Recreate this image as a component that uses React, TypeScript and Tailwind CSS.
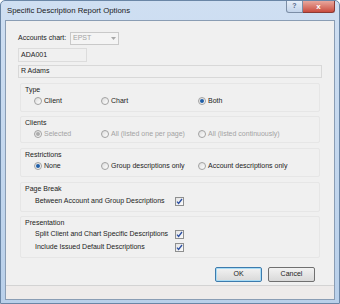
import React from "react";

const font = { fontFamily: '"Liberation Sans", Arial, sans-serif' };

const Radio = ({ checked, disabled }: { checked?: boolean; disabled?: boolean }) => (
  <span className="w-[8px] h-[8px] rounded-full border border-[#a2a2a2] bg-gradient-to-br from-[#dcdcdc] to-[#ffffff] flex items-center justify-center shrink-0">
    {checked && (
      <span
        className={
          "w-[4px] h-[4px] rounded-full " +
          (disabled ? "bg-[#acacac]" : "bg-[#1f5fa8]")
        }
      />
    )}
  </span>
);

const Check = () => (
  <span className="w-[9px] h-[9px] border border-[#8e8f8f] bg-gradient-to-br from-[#e4e4e4] to-[#fbfbfb] flex items-center justify-center shrink-0">
    <svg width="7" height="7" viewBox="0 0 7 7">
      <path d="M1 3.6 L2.6 5.4 L6 1" fill="none" stroke="#2b4fa2" strokeWidth="1.3" />
    </svg>
  </span>
);

const RadioItem = ({
  label,
  checked,
  disabled,
  width,
}: {
  label: string;
  checked?: boolean;
  disabled?: boolean;
  width: string;
}) => (
  <div className={"flex items-center gap-[2px] " + width}>
    <Radio checked={checked} disabled={disabled} />
    <span className={disabled ? "text-[#a3a3a3]" : "text-[#222]"}>{label}</span>
  </div>
);

const Group = ({
  title,
  className,
  children,
}: {
  title: string;
  className: string;
  children: React.ReactNode;
}) => (
  <div className={"mx-[14px] border border-[#e6e6e6] rounded-[2px] flex flex-col " + className}>
    <div className="pl-[4px] text-[#222] leading-none flex items-center h-[11px]">{title}</div>
    {children}
  </div>
);

export default function App() {
  return (
    <div
      className="w-[340px] h-[304px] border border-[#6a86a6] rounded-t-[5px] bg-gradient-to-b from-[#cfdff2] to-[#b9d0ea] flex flex-col text-[7px]"
      style={font}
    >
      {/* title bar */}
      <div className="h-[19px] flex justify-between shrink-0">
        <div className="pl-[6px] pt-[4px] text-[7.8px] text-[#1a1a1a]">Specific Description Report Options</div>
        <div className="flex pr-[4px]">
          <div className="w-[17px] h-[12px] border border-[#7c8ea6] border-t-0 rounded-bl-[3px] bg-gradient-to-b from-[#e6eef8] to-[#c3d4ea] flex items-center justify-center text-[7px] text-[#55698a] font-bold">
            ?
          </div>
          <div className="w-[32px] h-[12px] border border-[#8b3a35] border-t-0 border-l-0 rounded-br-[3px] bg-gradient-to-b from-[#e7a79d] to-[#c94b3f] flex items-center justify-center text-[8px] text-white font-bold">
            x
          </div>
        </div>
      </div>

      {/* client area */}
      <div className="mx-[4px] h-[280px] border border-[#8a9db4] bg-[#f0f0f0] flex flex-col">
        <div className="flex items-center h-[13px] mt-[11px] pl-[12px]">
          <span className="w-[52px] text-[#222]">Accounts chart:</span>
          <div className="w-[49px] h-[13px] border border-[#c9c9c9] bg-[#f4f4f4] flex items-center justify-between px-[2px] text-[#a3a3a3]">
            <span>EPST</span>
            <svg width="5" height="3" viewBox="0 0 5 3">
              <path d="M0 0 H5 L2.5 3 Z" fill="#a8a8a8" />
            </svg>
          </div>
        </div>

        <div className="ml-[12px] mt-[3px] w-[69px] h-[14px] border border-[#dcdcdc] flex items-center px-[2px] text-[#222]">
          ADA001
        </div>

        <div className="mx-[12px] mt-[3px] h-[13px] border border-[#d8d8d8] flex items-center px-[2px] text-[#222]">
          R Adams
        </div>

        <Group title="Type" className="mt-[5px] h-[29px]">
          <div className="flex items-center h-[12px] pl-[13px]">
            <RadioItem label="Client" width="w-[67px]" />
            <RadioItem label="Chart" width="w-[97px]" />
            <RadioItem label="Both" checked width="w-[80px]" />
          </div>
        </Group>

        <Group title="Clients" className="mt-[4px] h-[27px]">
          <div className="flex items-center h-[12px] pl-[13px]">
            <RadioItem label="Selected" checked disabled width="w-[67px]" />
            <RadioItem label="All (listed one per page)" disabled width="w-[97px]" />
            <RadioItem label="All (listed continuously)" disabled width="w-[90px]" />
          </div>
        </Group>

        <Group title="Restrictions" className="mt-[5px] h-[29px]">
          <div className="flex items-center h-[12px] pl-[13px]">
            <RadioItem label="None" checked width="w-[67px]" />
            <RadioItem label="Group descriptions only" width="w-[97px]" />
            <RadioItem label="Account descriptions only" width="w-[95px]" />
          </div>
        </Group>

        <Group title="Page Break" className="mt-[5px] h-[30px]">
          <div className="flex items-center h-[15px] pl-[14px]">
            <span className="w-[140px] text-[#222]">Between Account and Group Descriptions</span>
            <Check />
          </div>
        </Group>

        <Group title="Presentation" className="mt-[4px] h-[42px]">
          <div className="flex items-center h-[13px] pl-[14px]">
            <span className="w-[140px] text-[#222]">Split Client and Chart Specific Descriptions</span>
            <Check />
          </div>
          <div className="flex items-center h-[13px] pl-[14px]">
            <span className="w-[140px] text-[#222]">Include Issued Default Descriptions</span>
            <Check />
          </div>
        </Group>

        <div className="flex justify-end gap-[6px] pr-[19px] mt-[9px]">
          <button className="w-[47px] h-[15px] rounded-[2px] border border-[#3d7bad] bg-gradient-to-b from-[#f2f2f2] to-[#d9d9d9] text-[#222] shadow-[inset_0_0_0_1px_#a9dcf5]">
            OK
          </button>
          <button className="w-[47px] h-[15px] rounded-[2px] border border-[#707070] bg-gradient-to-b from-[#f2f2f2] to-[#d9d9d9] text-[#222]">
            Cancel
          </button>
        </div>

        <div className="flex-1" />
        <div className="h-[14px] border-t border-[#d3d3d3] bg-[#eeebea]" />
      </div>
    </div>
  );
}
